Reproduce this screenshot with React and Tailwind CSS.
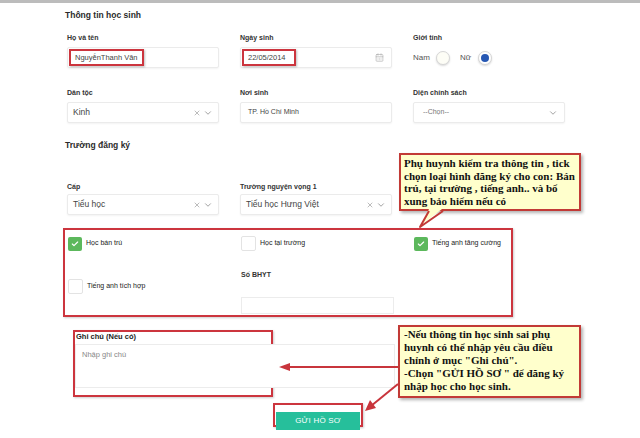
import React from 'react';
import { X, ChevronDown, CalendarDays, Check } from 'lucide-react';

function Label({ children, className = '' }) {
  return <div className={`text-[7px] font-bold leading-[10px] text-[#333] ${className}`}>{children}</div>;
}

function Box({ children, className = '' }) {
  return (
    <div className={`flex items-center h-[21px] w-[152px] bg-white border border-[#ebebeb] rounded-[2px] shadow-[0_1px_2px_rgba(0,0,0,0.05)] ${className}`}>
      {children}
    </div>
  );
}

function Select({ value, clear = true, textClass = 'text-[8.5px] text-[#444]' }) {
  return (
    <Box className="pl-[5px] pr-[5px] justify-between">
      <span className={textClass}>{value}</span>
      <span className="flex items-center gap-[2px] text-[#9a9a9a]">
        {clear && <X size={8} strokeWidth={2} />}
        <ChevronDown size={10} strokeWidth={2.2} />
      </span>
    </Box>
  );
}

function Checkbox({ checked }) {
  if (checked) {
    return (
      <span className="flex items-center justify-center w-[14px] h-[14px] rounded-[2px] bg-[#5cb85c] shrink-0">
        <Check size={8} color="white" strokeWidth={3.5} />
      </span>
    );
  }
  return <span className="w-[15px] h-[15px] rounded-[2px] border border-[#e3e3e3] bg-white shrink-0" />;
}

function Option({ checked, children }) {
  return (
    <div className="flex items-center gap-[4px]">
      <Checkbox checked={checked} />
      <span className="text-[7px] text-[#222]">{children}</span>
    </div>
  );
}

export default function App() {
  return (
    <div className="relative w-[640px] h-[438px] overflow-hidden bg-white text-[#333] font-['Liberation_Sans',Arial,sans-serif]">
      <div className="h-[3px] bg-[#bcbcbc]" />

      <div className="pl-[65px]">
        {/* Thông tin học sinh */}
        <h2 className="mt-[6px] text-[8.5px] font-bold leading-[12px] text-[#2b2b2b]">Thông tin học sinh</h2>

        <div className="mt-[12px] ml-[2px] grid grid-cols-[153px_153px_153px] gap-x-[20px]">
          <div>
            <Label>Họ và tên</Label>
            <Box className="mt-[4px] pl-[1px]">
              <span className="flex items-center h-[17px] w-[75px] pl-[4px] border-2 border-[#cc353e] shadow-[1px_1px_2px_rgba(0,0,0,0.25)] text-[7.5px] text-[#444]">
                NguyễnThanh Văn
              </span>
            </Box>
          </div>
          <div>
            <Label>Ngày sinh</Label>
            <Box className="mt-[4px] pl-[1px] pr-[7px] justify-between">
              <span className="flex items-center h-[17px] w-[54px] pl-[4px] border-2 border-[#cc353e] shadow-[1px_1px_2px_rgba(0,0,0,0.25)] text-[7.5px] text-[#444]">
                22/05/2014
              </span>
              <CalendarDays size={9} className="text-[#aaa]" strokeWidth={1.6} />
            </Box>
          </div>
          <div>
            <Label>Giới tính</Label>
            <div className="mt-[4px] h-[21px] flex items-center text-[8px] text-[#555]">
              <span>Nam</span>
              <span className="ml-[6px] w-[14px] h-[14px] rounded-full border border-[#d6d6d6] bg-[#fdfdf6] shadow-[0_1px_2px_rgba(0,0,0,0.15)]" />
              <span className="ml-[10px]">Nữ</span>
              <span className="ml-[7px] flex items-center justify-center w-[14px] h-[14px] rounded-full border border-[#d6d6d6] bg-white shadow-[0_1px_2px_rgba(0,0,0,0.15)]">
                <span className="w-[8px] h-[8px] rounded-full bg-[#2657b3]" />
              </span>
            </div>
          </div>
        </div>

        <div className="mt-[20px] ml-[2px] grid grid-cols-[153px_153px_153px] gap-x-[20px]">
          <div>
            <Label>Dân tộc</Label>
            <div className="mt-[4px]">
              <Select value="Kinh" />
            </div>
          </div>
          <div>
            <Label>Nơi sinh</Label>
            <Box className="mt-[4px] pl-[7px]">
              <span className="text-[7px] text-[#444]">TP. Hồ Chí Minh</span>
            </Box>
          </div>
          <div>
            <Label>Diện chính sách</Label>
            <Box className="mt-[4px] pl-[9px] pr-[6px] justify-between">
              <span className="text-[7px] text-[#777]">--Chọn--</span>
              <ChevronDown size={10} strokeWidth={2.2} className="text-[#9a9a9a]" />
            </Box>
          </div>
        </div>

        {/* Trường đăng ký */}
        <h2 className="mt-[16px] text-[8.5px] font-bold leading-[12px] text-[#2b2b2b]">Trường đăng ký</h2>

        <div className="mt-[31px] ml-[2px] grid grid-cols-[153px_153px_153px] gap-x-[20px]">
          <div>
            <Label>Cấp</Label>
            <div className="mt-[2px]">
              <Select value="Tiểu học" />
            </div>
          </div>
          <div>
            <Label>Trường nguyện vọng 1</Label>
            <div className="mt-[2px]">
              <Select value="Tiểu học Hưng Việt" />
            </div>
          </div>
        </div>

        {/* Loại hình đăng ký */}
        <div className="mt-[13px] ml-[-2px] w-[450px] h-[89px] border-2 border-[#cc353e] shadow-[1px_1px_2px_rgba(0,0,0,0.2)]">
          <div className="pt-[6px] pl-[3px] grid grid-cols-[153px_153px_153px] gap-x-[20px] gap-y-[20px]">
            <Option checked>Học bán trú</Option>
            <Option>Học tại trường</Option>
            <Option checked>Tiếng anh tăng cường</Option>
            <div className="mt-[8px]">
              <Option>Tiếng anh tích hợp</Option>
            </div>
            <div>
              <div className="text-[7px] font-bold leading-[8px] text-[#333]">Số BHYT</div>
              <div className="mt-[18px] h-[17px] w-[153px] border border-[#ececec] bg-white" />
            </div>
          </div>
        </div>

        {/* Ghi chú */}
        <div className="mt-[13px] ml-[8px] w-[200px] h-[67px] border-2 border-[#cc353e] shadow-[1px_1px_2px_rgba(0,0,0,0.2)]">
          <div className="pl-[1px] text-[7.5px] font-bold leading-[9px] text-[#222]">Ghi chú (Nếu có)</div>
          <div className="mt-[3px] w-[320px] h-[44px] border border-[#ececec] bg-white pt-[5px] pl-[6px]">
            <div className="text-[7.5px] leading-[10px] text-[#888]">Nhập ghi chú</div>
          </div>
        </div>

        <div className="mt-[6px] ml-[208px] w-[90px] h-[24px] border-2 border-[#cc353e] p-[1px] shadow-[1px_1px_2px_rgba(0,0,0,0.2)]">
          <button className="w-full h-full bg-[#26bf9b] text-white text-[8px] tracking-[0.2px]">GỬI HỒ SƠ</button>
        </div>
      </div>

      {/* Chú thích */}
      <div className="absolute left-[399px] top-[153px] w-[182px] h-[58px] bg-[#ffffcc] border-2 border-[#c23a36] shadow-[2px_2px_3px_rgba(0,0,0,0.3)] pt-[2px] pl-[3px] font-['Liberation_Serif','Times_New_Roman',serif] font-bold text-[11px] leading-[12.5px] text-[#111]">
        <div className="whitespace-nowrap">Phụ huynh kiểm tra thông tin , tick</div>
        <div className="whitespace-nowrap">chọn loại hình đăng ký cho con: Bán</div>
        <div className="whitespace-nowrap">trú, tại trường , tiếng anh.. và bổ</div>
        <div className="whitespace-nowrap">xung bảo hiểm nếu có</div>
      </div>

      <div className="absolute left-[398px] top-[325px] w-[183px] h-[73px] bg-[#ffffcc] border-2 border-[#c23a36] shadow-[2px_2px_3px_rgba(0,0,0,0.3)] pt-[1px] pl-[4px] font-['Liberation_Serif','Times_New_Roman',serif] font-bold text-[11px] leading-[13px] text-[#111]">
        <div className="whitespace-nowrap">-Nếu thông tin học sinh sai phụ</div>
        <div className="whitespace-nowrap">huynh có thể nhập yêu cầu điều</div>
        <div className="whitespace-nowrap">chỉnh ở mục "Ghi chú".</div>
        <div className="whitespace-nowrap">-Chọn "GỬI HỒ SƠ " để đăng ký</div>
        <div className="whitespace-nowrap">nhập học cho học sinh.</div>
      </div>

      <svg className="absolute inset-0 pointer-events-none" width="640" height="438" viewBox="0 0 640 438">
        <polygon points="429,209 421,225 442,209" fill="#ffffcc" />
        <polyline points="429,211 420,227 443,211" fill="none" stroke="#c23a36" strokeWidth="2" strokeLinejoin="round" />
        <line x1="398" y1="367" x2="287" y2="367" stroke="#c8353c" strokeWidth="2" />
        <polygon points="279,367 290,363 290,371" fill="#c8353c" />
        <line x1="398" y1="384" x2="371" y2="406" stroke="#c8353c" strokeWidth="2" />
        <polygon points="365,411 376,408 370,400" fill="#c8353c" />
      </svg>
    </div>
  );
}
